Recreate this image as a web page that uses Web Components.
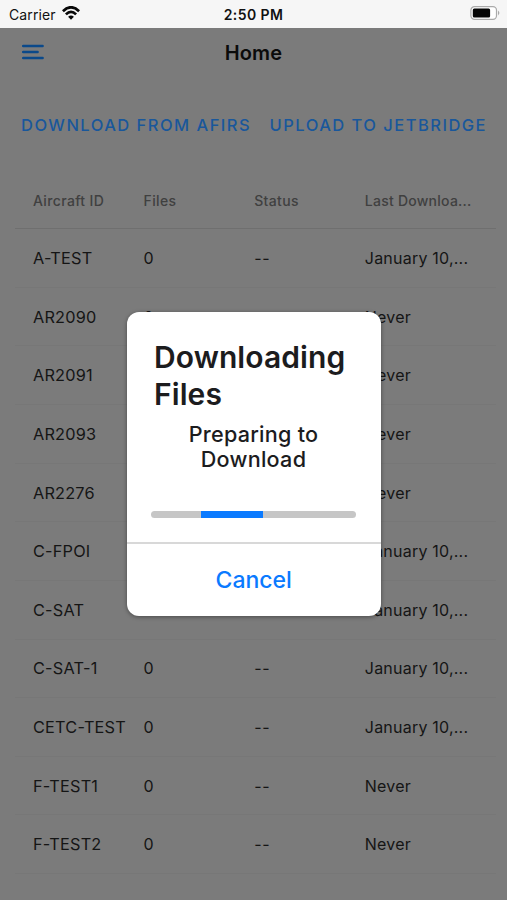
<!DOCTYPE html>
<html lang="en">
<head>
<meta charset="utf-8">
<title>Home</title>
<style>
body{margin:0;font-family:Inter,"Liberation Sans",sans-serif;background:#7b7b7b;overflow:hidden}
</style>
</head>
<body>
<home-screen></home-screen>
<script>
const define = (name, html, setup) => customElements.define(name, class extends HTMLElement {
  connectedCallback() {
    if (this.shadowRoot) return;
    this.attachShadow({ mode: 'open' }).innerHTML = html;
    if (setup) setup(this);
  }
});

define('status-bar', `<style>
:host{display:grid;grid-template-columns:1fr auto 1fr;align-items:center;height:28px;box-sizing:border-box;padding:0 6px 0 9px;background:#f6f6f6;color:#111}
.carrier{display:flex;align-items:center;gap:6px;font-size:14px}
.carrier span{letter-spacing:.1px}
.time{font-size:14px;font-weight:600;letter-spacing:.4px;margin-right:3px}
.battery{justify-self:end}
svg{display:block;position:relative;top:-1px}
</style>
<div class="carrier"><span>Carrier</span>
<svg width="18" height="14" viewBox="0 0 18 14" fill="none" stroke="#080808" stroke-width="2.7"><path d="M.9 5.2Q9-2.6 17.1 5.2"/><path d="M3.9 8.4Q9 3.4 14.1 8.4"/><path d="M9 13.8 6.1 10.8Q9 8.3 11.9 10.8Z" fill="#080808" stroke="none"/></svg></div>
<div class="time">2:50 PM</div>
<svg class="battery" width="31" height="14" viewBox="0 0 31 14"><rect x=".9" y=".7" width="25.6" height="12.6" rx="3.6" fill="#fff" stroke="#aaa" stroke-width="1.2"/><rect x="2.8" y="2.5" width="17.3" height="9" rx="1.5" fill="#050505"/><path d="M28 4.6Q30.8 7 28 9.4Z" fill="#aaa"/></svg>`);

define('nav-bar', `<style>
:host{display:grid;grid-template-columns:1fr auto 1fr;align-items:center;height:49px;box-sizing:border-box;padding:0 22px}
svg{display:block;margin-top:-1px}
.title{font-size:20px;font-weight:600;letter-spacing:.1px;color:#0b0b0b}
</style>
<svg width="22" height="16" viewBox="0 0 22 16" stroke="#0b498a" stroke-width="2.5" stroke-linecap="round"><path d="M1.2 2H20.6M1.2 8H15.6M1.2 14.1H20.6"/></svg>
<div class="title"><slot></slot></div>`);

define('text-button', `<style>
:host{display:block;font-size:16.5px;font-weight:500;line-height:20px;white-space:nowrap;color:#19579b}
</style><slot></slot>`);

define('data-row', `<style>
:host{display:grid;grid-template-columns:repeat(4,110.6px);align-items:center;height:58.64px;box-sizing:border-box;padding-left:18px;border-bottom:1px solid #777;font-size:16px;color:#151515;white-space:nowrap}
:host([head]){height:57.2px;border-color:#6f6f6f;font-size:14px;font-weight:500;letter-spacing:.36px;color:#404040}
</style><slot></slot>`);

define('aircraft-table', `<style>
:host{display:block;margin:0 11px 0 15px}
.id{font-size:16.3px;letter-spacing:.2px}.status{letter-spacing:.6px}.date{letter-spacing:.22px}.head-last{letter-spacing:.25px}
</style><data-row head><span>Aircraft ID</span><span>Files</span><span>Status</span><span class="head-last">Last Downloa...</span></data-row>`, el => {
  const dated = 'January 10,...';
  const rows = [['A-TEST', dated], ['AR2090', 'Never'], ['AR2091', 'Never'], ['AR2093', 'Never'], ['AR2276', 'Never'],
    ['C-FPOI', dated], ['C-SAT', dated], ['C-SAT-1', dated], ['CETC-TEST', dated], ['F-TEST1', 'Never'], ['F-TEST2', 'Never']];
  el.shadowRoot.innerHTML += rows.map(([id, date]) =>
    `<data-row><span class="id">${id}</span><span>0</span><span class="status">--</span><span class="date">${date}</span></data-row>`).join('');
});

define('progress-bar', `<style>
:host{display:block;height:7px;border-radius:4px;background:#c6c6c6;overflow:hidden}
div{height:100%;width:62px;margin-left:50px;background:#0a7aff}
</style><div></div>`);

define('download-dialog', `<style>
:host{display:flex;flex-direction:column;position:absolute;left:126.5px;top:311.5px;width:254.5px;height:304.5px;box-sizing:border-box;border-radius:12px;background:#fff;box-shadow:0 1px 4px #0006;overflow:hidden;color:#1c1c1e}
.body{height:232.5px;box-sizing:border-box;padding:27.5px 25px 0 24.5px;border-bottom:2px solid #d8d8d8}
h2{margin:0 0 0 3px;font-size:30px;line-height:36.6px;font-weight:600;letter-spacing:.08px;white-space:nowrap}
p{margin:10px 0 0;font-size:21.6px;line-height:24.5px;text-align:center;font-weight:450;letter-spacing:.25px}
progress-bar{margin-top:40px}
.cancel{flex:1;display:flex;align-items:center;justify-content:center;font-size:23px;font-weight:500;color:#0a7aff}
</style>
<div class="body"><h2>Downloading<br>Files</h2><p>Preparing to<br>Download</p><progress-bar></progress-bar></div>
<div class="cancel">Cancel</div>`);

define('home-screen', `<style>
:host{display:block;position:relative;width:507px;height:900px;overflow:hidden;background:#7b7b7b}
.actions{display:flex;height:95px;align-items:center;box-sizing:border-box;padding:0 21px;justify-content:space-between}
.a{letter-spacing:1.47px}.b{letter-spacing:1.47px;margin-right:-1px}
</style>
<status-bar></status-bar><nav-bar>Home</nav-bar>
<div class="actions"><text-button class="a">DOWNLOAD FROM AFIRS</text-button><text-button class="b">UPLOAD TO JETBRIDGE</text-button></div>
<aircraft-table></aircraft-table>
<download-dialog></download-dialog>`);
</script>
</body>
</html>
